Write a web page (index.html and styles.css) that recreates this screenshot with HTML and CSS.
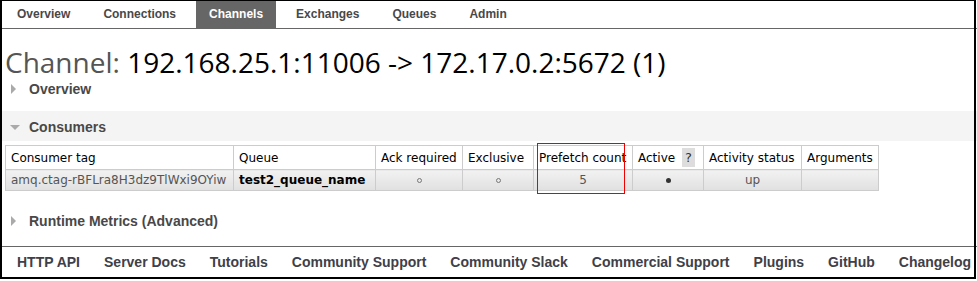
FILE: index.html
```html
<!DOCTYPE html>
<html>
<head>
  <meta name="viewport" content="width=device-width, initial-scale=1">
  <link rel="stylesheet" href="styles.css">
</head>
<body>

  <div class="menu">
    <a class="tab" href="#">Overview</a>
    <a class="tab" href="#">Connections</a>
    <a class="tab selected" href="#">Channels</a>
    <a class="tab" href="#">Exchanges</a>
    <a class="tab" href="#">Queues</a>
    <a class="tab" href="#">Admin</a>
  </div>

  <div class="main">
    <h1><span class="grey">Channel:</span> 192.168.25.1:11006 -&gt; 172.17.0.2:5672 (1)</h1>

    <div class="section">
      <h2 class="sectionHead"><span class="arrowRight"></span>Overview</h2>
    </div>

    <div class="section">
      <h2 class="sectionHead open"><span class="arrowDown"></span>Consumers</h2>
      <div class="tableBox">
        <table class="list">
          <colgroup>
            <col style="width:228px"><col style="width:142px"><col style="width:87px"><col style="width:71px">
            <col style="width:99px"><col style="width:71px"><col style="width:98px"><col style="width:77px">
          </colgroup>
          <tr>
            <th>Consumer tag</th>
            <th>Queue</th>
            <th>Ack required</th>
            <th>Exclusive</th>
            <th>Prefetch count</th>
            <th>Active <span class="help">?</span></th>
            <th>Activity status</th>
            <th>Arguments</th>
          </tr>
          <tr>
            <td class="tag">amq.ctag-rBFLra8H3dz9TlWxi9OYiw</td>
            <td class="queue">test2_queue_name</td>
            <td class="c"><span class="off"></span></td>
            <td class="c"><span class="off"></span></td>
            <td class="c">5</td>
            <td class="c"><span class="on"></span></td>
            <td class="c">up</td>
            <td></td>
          </tr>
        </table>
        <div class="mark"></div>
      </div>
    </div>

    <div class="section">
      <h2 class="sectionHead"><span class="arrowRight"></span>Runtime Metrics (Advanced)</h2>
    </div>
  </div>

  <div class="footer">
    <a href="#">HTTP API</a>
    <a href="#">Server Docs</a>
    <a href="#">Tutorials</a>
    <a href="#">Community Support</a>
    <a href="#">Community Slack</a>
    <a href="#">Commercial Support</a>
    <a href="#">Plugins</a>
    <a href="#">GitHub</a>
    <a href="#">Changelog</a>
  </div>

  <div class="frame"></div>

</body>
</html>
```

FILE: styles.css
```css
html {
  background-color: #fff;
}
body {
  margin: 0;
  font-family: "DejaVu Sans", Verdana, sans-serif;
  font-size: 12px;
  color: #484848;
}
a {
  text-decoration: none;
  color: #484848;
}

.menu {
  display: flex;
  gap: 7px;
  padding-left: 4px;
  height: 28px;
  border-bottom: 1px solid #666;
}
.tab {
  font-family: "Liberation Sans", Arial, sans-serif;
  font-size: 12px;
  font-weight: bold;
  line-height: 28px;
  padding: 0 13px;
}
.tab.selected {
  background-color: #666;
  color: #fff;
}

h1 {
  margin: 16px 0 0 5px;
  font-family: "Open Sans", sans-serif;
  font-weight: normal;
  font-size: 28px;
  line-height: 34px;
  color: #000;
  white-space: nowrap;
}
.grey {
  color: #555;
}

.sectionHead {
  margin: 0;
  font-family: "Liberation Sans", Arial, sans-serif;
  font-size: 14px;
  font-weight: bold;
  line-height: 20px;
  padding-left: 29px;
  position: relative;
  color: #484848;
}
.sectionHead.open {
  margin-top: 12px;
  padding-top: 6px;
  padding-bottom: 4px;
  background-color: #f4f4f4;
}
.arrowRight {
  position: absolute;
  left: 11px;
  top: 5px;
  border-left: 5px solid #aaa;
  border-top: 5px solid transparent;
  border-bottom: 5px solid transparent;
}
.arrowDown {
  position: absolute;
  left: 10px;
  top: 14px;
  border-top: 5px solid #aaa;
  border-left: 5px solid transparent;
  border-right: 5px solid transparent;
}

.tableBox {
  position: relative;
  margin: 4px 0 0 5px;
  width: 874px;
}
.list {
  border-collapse: collapse;
  table-layout: fixed;
  width: 873px;
}
.list th {
  font-weight: normal;
  text-align: left;
  color: #000;
  background-color: #fff;
  border: 1px solid #ccc;
  height: 23px;
  padding: 0 5px;
  white-space: nowrap;
}
.list td {
  border: 1px solid #ccc;
  height: 20px;
  padding: 0 5px;
  background: linear-gradient(#f2f2f2, #e0e0e0);
  color: #555;
  white-space: nowrap;
}
.list td.queue {
  font-weight: bold;
  color: #000;
}
.list td.c {
  text-align: center;
}
.help {
  display: inline-block;
  background-color: #ddd;
  padding: 0 3px;
  font-size: 13px;
  line-height: 19px;
  margin-left: 3px;
  color: #333;
}
.off {
  display: inline-block;
  width: 3px;
  height: 3px;
  border: 1px solid #777;
  border-radius: 50%;
  vertical-align: middle;
}
.on {
  display: inline-block;
  width: 5px;
  height: 5px;
  background-color: #333;
  border-radius: 50%;
  vertical-align: middle;
}
.mark {
  position: absolute;
  left: 532px;
  top: -2px;
  width: 86px;
  height: 49px;
  border: 1px solid #e00;
}

.section + .section .sectionHead {
  margin-top: 12px;
}
.section:last-child .sectionHead {
  margin-top: 20px;
}

.footer {
  margin-top: 15px;
  border-top: 1px solid #666;
  padding: 5px 0 0 17px;
  display: flex;
  gap: 24px;
}
.footer a {
  font-family: "Liberation Sans", Arial, sans-serif;
  font-size: 14px;
  font-weight: bold;
  line-height: 20px;
  white-space: nowrap;
  color: #404048;
}

.frame {
  position: absolute;
  left: 0;
  top: 0;
  width: 976px;
  height: 279px;
  box-sizing: border-box;
  border: 2px solid #000;
  border-top-width: 1px;
  pointer-events: none;
}
```
